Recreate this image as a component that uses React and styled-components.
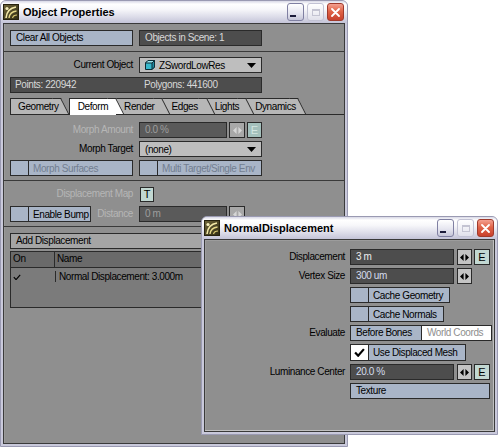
import React from 'react'
import styled, { createGlobalStyle } from 'styled-components'

const UI_FONT = '"Liberation Sans Narrow", "Arial Narrow", "Liberation Sans", Arial, sans-serif'

const GlobalStyle = createGlobalStyle`
  html, body { margin: 0; padding: 0; background: #ffffff; }
  body { font-family: ${UI_FONT}; font-size: 10px; letter-spacing: -0.4px; color: #000; }
`

const Desktop = styled.div`
  position: relative;
  width: 500px;
  height: 447px;
  overflow: hidden;
  background: #ffffff;
`

const Window = styled.div`
  position: absolute;
  left: ${p => p.$left}px;
  top: ${p => p.$top}px;
  width: ${p => p.$width}px;
  height: ${p => p.$height}px;
  box-sizing: border-box;
  display: flex;
  flex-direction: column;
  padding: 0 2px 2px 2px;
  background: #c9c9db;
  border: 1px solid #9a9ab2;
  border-radius: 6px 6px 0 0;
`

const TitleBar = styled.div`
  flex: none;
  height: 22px;
  margin: 0 -2px;
  padding: 0 2px 0 2px;
  display: flex;
  align-items: center;
  border-radius: 5px 5px 0 0;
  background: linear-gradient(180deg, #d8d8e6 0%, #ffffff 14%, #f7f7fa 38%, #dedeea 70%, #c4c4d8 100%);
`

const TitleText = styled.span`
  flex: 1;
  margin-left: 4px;
  font-family: "Liberation Sans", Arial, sans-serif;
  font-weight: bold;
  font-size: 11px;
  letter-spacing: 0;
  color: #000;
  white-space: nowrap;
`

const CaptionButtons = styled.div`
  display: flex;
  gap: 3px;
  margin-right: 1px;
`

const CaptionButton = styled.div`
  width: 17px;
  height: 18px;
  box-sizing: border-box;
  border-radius: 3px;
  display: flex;
  align-items: center;
  justify-content: center;
  border: 1px solid ${p => p.$kind === 'close' ? '#a03a2c' : p.$disabled ? '#c2c2d4' : '#8080a2'};
  background: ${p => p.$kind === 'close'
    ? 'linear-gradient(180deg, #f4a090 0%, #e06448 45%, #c8402c 100%)'
    : p.$disabled
      ? 'linear-gradient(180deg, #ffffff 0%, #eeeef4 60%, #e0e0ea 100%)'
      : 'linear-gradient(180deg, #ffffff 0%, #e6e6f0 55%, #c6c6d8 100%)'};
`

const MinGlyph = styled.span`
  width: 6px;
  height: 2px;
  margin: 8px 5px 0 0;
  background: #1c1c3a;
`

const MaxGlyph = styled.span`
  width: 8px;
  height: 7px;
  box-sizing: border-box;
  border: 1px solid #c4c4d2;
  border-top-width: 2px;
`

const Panel = styled.div`
  flex: 1;
  box-sizing: border-box;
  display: flex;
  flex-direction: column;
  background: #8f8f8f;
  border: 1px solid #3a3a3a;
  box-shadow: ${p => p.$inset ? 'inset -1px -1px 0 #c0c0c0, inset 1px 1px 0 #9c9c9c' : 'inset 1px 0 0 #9a9a9a'};
  padding: ${p => p.$pad || '0'};
  gap: ${p => p.$gap || 0}px;
`

const Section = styled.div`
  display: flex;
  flex-direction: column;
  gap: ${p => p.$gap ?? 3}px;
  padding: ${p => p.$pad};
  border-bottom: ${p => p.$divider ? '1px solid #3a3a3a' : 'none'};
`

const FlexRow = styled.div`
  display: flex;
  gap: ${p => p.$gap ?? 6}px;
  height: 16px;
`

const FormRow = styled.div`
  display: grid;
  grid-template-columns: ${p => p.$label}px auto;
  column-gap: ${p => p.$gap}px;
  align-items: center;
  justify-content: start;
  height: ${p => p.$h || 16}px;
  margin-top: ${p => p.$mt || 0}px;
`

const Label = styled.div`
  text-align: right;
  white-space: nowrap;
  line-height: 16px;
  color: ${p => p.$muted ? '#b6b6b6' : '#000'};
`

const Controls = styled.div`
  display: flex;
  align-items: center;
  gap: ${p => p.$gap ?? 2}px;
`

const Field = styled.div`
  box-sizing: border-box;
  width: ${p => p.$w}px;
  height: 16px;
  line-height: 14px;
  padding: 0 5px;
  border: 1px solid #2a2a2a;
  background: ${p => p.$disabled ? '#5a5a5a' : '#4d4d4d'};
  color: ${p => p.$disabled ? '#9e9e9e' : p.$tone || '#d8d8d8'};
  white-space: nowrap;
  overflow: hidden;
`

const Button = styled.div`
  box-sizing: border-box;
  width: ${p => p.$w}px;
  height: 16px;
  line-height: 14px;
  padding: 0 5px;
  border: 1px solid #2a2a2a;
  background: ${p => p.$bg || '#a9b5c7'};
  color: ${p => p.$muted ? '#727e90' : '#000'};
  white-space: nowrap;
  overflow: hidden;
`

const CheckButton = styled.div`
  box-sizing: border-box;
  width: ${p => p.$w}px;
  height: ${p => p.$h || 16}px;
  display: flex;
  border: 1px solid #2a2a2a;
  background: #a9b5c7;
  color: ${p => p.$muted ? '#727e90' : '#000'};
`

const CheckBox = styled.div`
  flex: none;
  width: 18px;
  box-sizing: border-box;
  border-right: 1px solid #2a2a2a;
  background: ${p => p.$checked ? '#ffffff' : 'transparent'};
  display: flex;
  align-items: center;
  justify-content: center;
`

const CheckLabel = styled.span`
  align-self: center;
  padding-left: 4px;
  white-space: nowrap;
`

const Dropdown = styled.div`
  box-sizing: border-box;
  width: ${p => p.$w}px;
  height: 16px;
  display: flex;
  align-items: center;
  gap: 4px;
  padding: 0 5px 0 5px;
  border: 1px solid #2a2a2a;
  background: #bebebe;
`

const DropText = styled.span`
  flex: 1;
  white-space: nowrap;
`

const Spin = styled.div`
  box-sizing: border-box;
  width: ${p => p.$w || 15}px;
  height: 16px;
  display: flex;
  align-items: center;
  justify-content: center;
  border: 1px solid #2a2a2a;
  background: ${p => p.$disabled ? '#a8a8a8' : '#c4c4c4'};
`

const EnvButton = styled.div`
  box-sizing: border-box;
  width: ${p => p.$w || 16}px;
  height: ${p => p.$h || 16}px;
  line-height: ${p => (p.$h || 16) - 2}px;
  text-align: center;
  letter-spacing: 0;
  font-size: 11px;
  border: 1px solid #2a2a2a;
  background: ${p => p.$disabled ? '#a4c0bc' : '#c2d8d2'};
  color: ${p => p.$disabled ? '#d4e6e2' : '#000'};
`

const StatsBar = styled.div`
  box-sizing: border-box;
  width: 252px;
  height: 16px;
  display: grid;
  grid-template-columns: 129px 1fr;
  line-height: 14px;
  border: 1px solid #2a2a2a;
  background: #4d4d4d;
  color: #d8d8d8;
  margin-top: 1px;
  & > span { padding-left: 4px; white-space: nowrap; }
`

const TabStrip = styled.div`
  display: flex;
  height: 16px;
  margin-top: 2px;
  border-bottom: 1px solid #2a2a2a;
`

const Tab = styled.div`
  position: relative;
  box-sizing: border-box;
  height: ${p => p.$active ? 17 : 16}px;
  line-height: 15px;
  padding: 0 ${p => p.$padR ?? 3}px 0 ${p => p.$padL ?? 8}px;
  margin-left: ${p => p.$active ? 8 : 0}px;
  margin-bottom: ${p => p.$active ? -1 : 0}px;
  background: ${p => p.$active ? '#ffffff' : '#b7b7b7'};
  border-top: 1px solid #2a2a2a;
  border-left: ${p => p.$first || p.$active ? '1px solid #2a2a2a' : 'none'};
  z-index: ${p => p.$z};
  white-space: nowrap;
  &::after {
    content: '';
    position: absolute;
    top: -1px;
    right: 0;
    width: 9px;
    height: 16px;
    box-sizing: border-box;
    background: inherit;
    border-top: 1px solid #2a2a2a;
    border-right: 1px solid #2a2a2a;
    transform: skewX(27deg);
    transform-origin: top left;
    z-index: -1;
  }
`

const AddButton = styled.div`
  box-sizing: border-box;
  width: 328px;
  height: 16px;
  line-height: 14px;
  padding: 0 5px;
  border: 1px solid #2a2a2a;
  background: #a5a5a5;
`

const List = styled.div`
  box-sizing: border-box;
  width: 328px;
  height: 57px;
  border: 1px solid #2a2a2a;
  background: #7b7b7b;
`

const ListHeader = styled.div`
  display: grid;
  grid-template-columns: 43px 1fr;
  height: 15px;
  line-height: 14px;
  background: #6a6a6a;
  border-bottom: 1px solid #2a2a2a;
`

const Cell = styled.div`
  padding-left: ${p => p.$pad}px;
  white-space: nowrap;
  & + & { border-left: 1px solid #2a2a2a; }
`

const ListRow = styled.div`
  display: grid;
  grid-template-columns: 44px 1fr;
  height: 15px;
  margin-top: 1px;
  align-items: center;
`

const Segmented = styled.div`
  display: flex;
  box-sizing: border-box;
  height: 16px;
  border: 1px solid #2a2a2a;
`

const Segment = styled.div`
  box-sizing: border-box;
  width: ${p => p.$w}px;
  padding-left: 5px;
  line-height: 14px;
  white-space: nowrap;
  background: ${p => p.$on ? '#a9b5c7' : '#ffffff'};
  color: ${p => p.$on ? '#000' : '#8e8e8e'};
  & + & { border-left: 1px solid #2a2a2a; }
`

const AppIcon = () => (
  <svg width="16" height="16" viewBox="0 0 16 16" style={{ flex: 'none' }}>
    <defs>
      <linearGradient id="lwbg" x1="0" y1="0" x2="1" y2="1">
        <stop offset="0" stopColor="#6e6538" />
        <stop offset="1" stopColor="#2e2a14" />
      </linearGradient>
    </defs>
    <rect x="0.5" y="0.5" width="15" height="15" fill="url(#lwbg)" stroke="#26220e" />
    <path d="M3 14 C3.5 8 7 4 13 3" stroke="#f3e9a8" strokeWidth="1.6" fill="none" />
    <path d="M6 14 C6.5 10 9 7.5 13.5 7" stroke="#e6d98a" strokeWidth="1.4" fill="none" />
    <path d="M9.5 14 C10 12 11.5 11 14 11" stroke="#d8c870" strokeWidth="1.2" fill="none" />
    <circle cx="4" cy="4.5" r="1.6" fill="#f6eebc" />
  </svg>
)

const CloseGlyph = () => (
  <svg width="9" height="9" viewBox="0 0 9 9">
    <path d="M1 1 L8 8 M8 1 L1 8" stroke="#ffffff" strokeWidth="1.8" strokeLinecap="round" />
  </svg>
)

const Caption = ({ title }) => (
  <TitleBar>
    <AppIcon />
    <TitleText>{title}</TitleText>
    <CaptionButtons>
      <CaptionButton><MinGlyph /></CaptionButton>
      <CaptionButton $disabled><MaxGlyph /></CaptionButton>
      <CaptionButton $kind="close"><CloseGlyph /></CaptionButton>
    </CaptionButtons>
  </TitleBar>
)

const CubeIcon = () => (
  <svg width="10" height="10" viewBox="0 0 10 10" style={{ flex: 'none' }}>
    <path d="M0.5 3 L3 0.5 L9.5 0.5 L9.5 7 L7 9.5 L0.5 9.5 Z" fill="#38b8cc" stroke="#0e2c36" />
    <path d="M0.5 3 L3 0.5 L9.5 0.5 L7 3 Z" fill="#9ae6f0" stroke="#0e2c36" />
    <path d="M7 3 L9.5 0.5 L9.5 7 L7 9.5 Z" fill="#1e8aa0" stroke="#0e2c36" />
  </svg>
)

const DownArrow = () => (
  <svg width="9" height="5" viewBox="0 0 9 5" style={{ flex: 'none' }}>
    <path d="M0 0 H9 L4.5 5 Z" fill="#000" />
  </svg>
)

const SpinGlyph = ({ color }) => (
  <svg width="9" height="7" viewBox="0 0 9 7">
    <path d="M0 3.5 L3.6 0 V7 Z M9 3.5 L5.4 0 V7 Z" fill={color} />
  </svg>
)

const Tick = ({ size = 10, w = 1.6 }) => (
  <svg width={size} height={size * 0.8} viewBox="0 0 10 8">
    <path d="M1 4 L3.8 7 L9 1" stroke="#000" strokeWidth={w} fill="none" />
  </svg>
)

const tabs = [
  { name: 'Geometry', padL: 7, padR: 2 },
  { name: 'Deform', padL: 8, padR: 8, active: true },
  { name: 'Render', padL: 8, padR: 7 },
  { name: 'Edges', padL: 10, padR: 9 },
  { name: 'Lights', padL: 8, padR: 7 },
  { name: 'Dynamics', padL: 9, padR: 2 },
]

const ObjectProperties = () => (
  <Window $left={0} $top={0} $width={348} $height={447}>
    <Caption title="Object Properties" />
    <Panel>
      <Section $pad="6px 0 5px 6px" $divider>
        <FlexRow>
          <Button $w={123}>Clear All Objects</Button>
          <Field $w={123}>Objects in Scene: 1</Field>
        </FlexRow>
      </Section>

      <Section $pad="5px 0 4px 6px" $divider>
        <FormRow $label={123} $gap={6}>
          <Label>Current Object</Label>
          <Dropdown $w={123}>
            <CubeIcon />
            <DropText>ZSwordLowRes</DropText>
            <DownArrow />
          </Dropdown>
        </FormRow>
        <StatsBar>
          <span>Points: 220942</span>
          <span>Polygons: 441600</span>
        </StatsBar>
        <TabStrip>
          {tabs.map((t, i) => (
            <Tab
              key={t.name}
              $first={i === 0}
              $active={t.active}
              $padL={t.padL}
              $padR={t.padR}
              $z={t.active ? 20 : 10 - i}
            >
              {t.name}
            </Tab>
          ))}
        </TabStrip>
        <FormRow $label={123} $gap={6} $mt={4}>
          <Label $muted>Morph Amount</Label>
          <Controls>
            <Field $w={88} $disabled>0.0 %</Field>
            <Spin $w={16} $disabled><SpinGlyph color="#d6d6d6" /></Spin>
            <EnvButton $w={15} $disabled>E</EnvButton>
          </Controls>
        </FormRow>
        <FormRow $label={123} $gap={6}>
          <Label>Morph Target</Label>
          <Dropdown $w={123}>
            <DropText>(none)</DropText>
            <DownArrow />
          </Dropdown>
        </FormRow>
        <FlexRow>
          <CheckButton $w={123} $muted>
            <CheckBox />
            <CheckLabel>Morph Surfaces</CheckLabel>
          </CheckButton>
          <CheckButton $w={123} $muted>
            <CheckBox />
            <CheckLabel>Multi Target/Single Env</CheckLabel>
          </CheckButton>
        </FlexRow>
      </Section>

      <Section $pad="5px 0 4px 6px" $gap={4} $divider>
        <FormRow $label={123} $gap={7}>
          <Label $muted>Displacement Map</Label>
          <EnvButton $w={14} $h={15}>T</EnvButton>
        </FormRow>
        <FlexRow $gap={0}>
          <CheckButton $w={81}>
            <CheckBox />
            <CheckLabel>Enable Bump</CheckLabel>
          </CheckButton>
          <Label $muted style={{ width: 42 }}>Distance</Label>
          <Controls style={{ marginLeft: 6 }}>
            <Field $w={88} $disabled>0 m</Field>
            <Spin $w={16} $disabled><SpinGlyph color="#d6d6d6" /></Spin>
          </Controls>
        </FlexRow>
      </Section>

      <Section $pad="6px 0 0 6px" $gap={2}>
        <AddButton>Add Displacement</AddButton>
        <List>
          <ListHeader>
            <Cell $pad={2}>On</Cell>
            <Cell $pad={2}>Name</Cell>
          </ListHeader>
          <ListRow>
            <Cell $pad={2}><Tick size={8} w={1.5} /></Cell>
            <Cell $pad={3}>Normal Displacement: 3.000m</Cell>
          </ListRow>
        </List>
      </Section>
    </Panel>
  </Window>
)

const NormalDisplacement = () => (
  <Window $left={201} $top={216} $width={297} $height={219}>
    <Caption title="NormalDisplacement" />
    <Panel $inset $pad="9px 0 0 0" $gap={3}>
      <FormRow $label={140} $gap={5}>
        <Label>Displacement</Label>
        <Controls>
          <Field $w={104} $tone="#eeeeee">3 m</Field>
          <Spin style={{ marginLeft: 1 }}><SpinGlyph color="#000" /></Spin>
          <EnvButton>E</EnvButton>
        </Controls>
      </FormRow>
      <FormRow $label={140} $gap={5}>
        <Label>Vertex Size</Label>
        <Controls>
          <Field $w={104} $tone="#d4dcec">300 um</Field>
          <Spin style={{ marginLeft: 1 }}><SpinGlyph color="#000" /></Spin>
        </Controls>
      </FormRow>
      <FormRow $label={140} $gap={5}>
        <span />
        <CheckButton $w={100}>
          <CheckBox />
          <CheckLabel>Cache Geometry</CheckLabel>
        </CheckButton>
      </FormRow>
      <FormRow $label={140} $gap={5}>
        <span />
        <CheckButton $w={94}>
          <CheckBox />
          <CheckLabel>Cache Normals</CheckLabel>
        </CheckButton>
      </FormRow>
      <FormRow $label={140} $gap={5}>
        <Label>Evaluate</Label>
        <Segmented>
          <Segment $w={70} $on>Before Bones</Segment>
          <Segment $w={70}>World Coords</Segment>
        </Segmented>
      </FormRow>
      <FormRow $label={140} $gap={5} $h={17}>
        <span />
        <CheckButton $w={116} $h={17}>
          <CheckBox $checked><Tick size={11} w={2} /></CheckBox>
          <CheckLabel>Use Displaced Mesh</CheckLabel>
        </CheckButton>
      </FormRow>
      <FormRow $label={140} $gap={5}>
        <Label>Luminance Center</Label>
        <Controls>
          <Field $w={104} $tone="#d4dcec">20.0 %</Field>
          <Spin style={{ marginLeft: 1 }}><SpinGlyph color="#000" /></Spin>
          <EnvButton>E</EnvButton>
        </Controls>
      </FormRow>
      <FormRow $label={140} $gap={5}>
        <span />
        <Button $w={140}>Texture</Button>
      </FormRow>
    </Panel>
  </Window>
)

export default function App() {
  return (
    <>
      <GlobalStyle />
      <Desktop>
        <ObjectProperties />
        <NormalDisplacement />
      </Desktop>
    </>
  )
}
